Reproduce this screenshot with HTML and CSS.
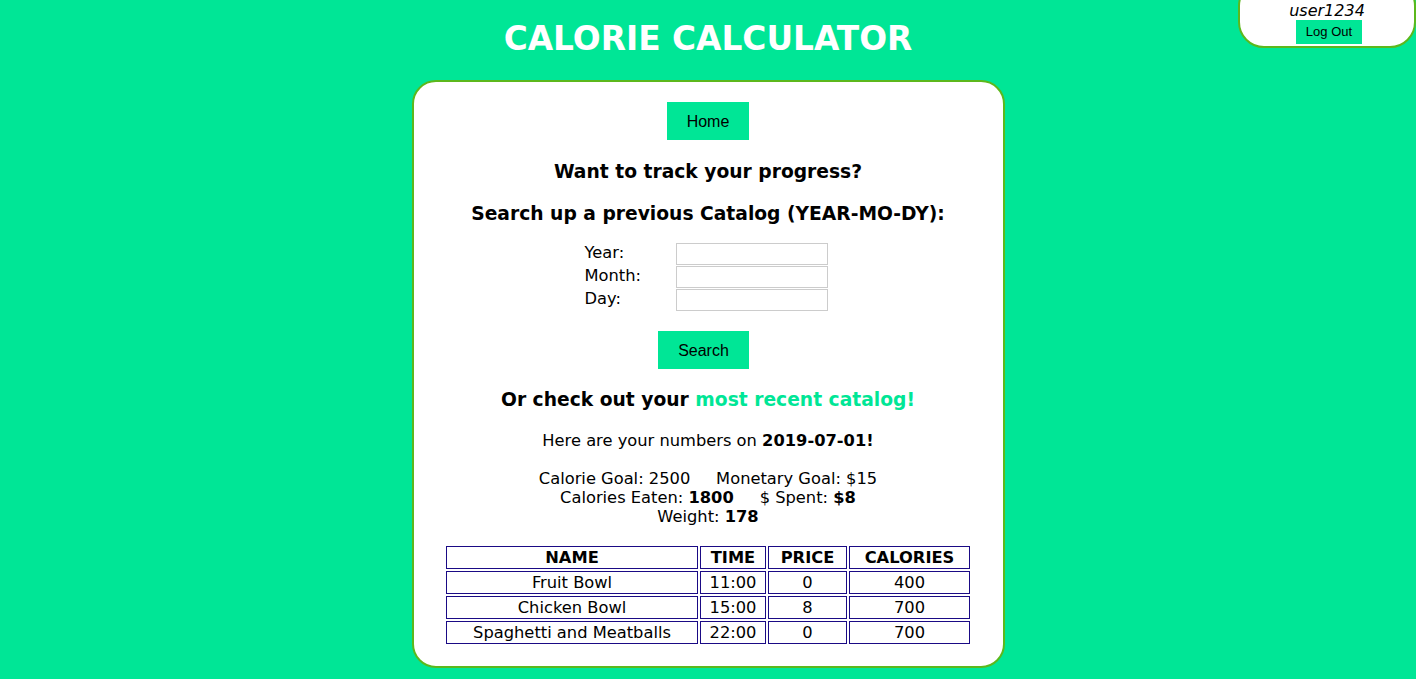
FILE: index.html
```html
<!DOCTYPE html>
<html lang="en">
<head>
<meta charset="utf-8">
<title>Calorie Calculator</title>
<link rel="stylesheet" href="styles.css">
</head>
<body>
<div class="userbox">
  <div class="username">user1234</div>
  <button class="btn btn-small">Log Out</button>
</div>
<h1 class="title">CALORIE CALCULATOR</h1>
<main class="card">
  <button class="btn">Home</button>
  <h3 class="heading heading-first">Want to track your progress?</h3>
  <h3 class="heading">Search up a previous Catalog (YEAR-MO-DY):</h3>
  <form class="search-form">
    <label class="field-label">Year:</label><input class="field-input" type="text">
    <label class="field-label">Month:</label><input class="field-input" type="text">
    <label class="field-label">Day:</label><input class="field-input" type="text">
  </form>
  <button class="btn btn-search">Search</button>
  <h3 class="heading">Or check out your <a class="recent-link" href="#">most recent catalog!</a></h3>
  <p class="numbers">Here are your numbers on <b>2019-07-01!</b></p>
  <div class="stats">
    <div>Calorie Goal: 2500&nbsp;&nbsp;&nbsp;&nbsp;&nbsp;Monetary Goal: $15</div>
    <div>Calories Eaten: <b>1800</b>&nbsp;&nbsp;&nbsp;&nbsp;&nbsp;$ Spent: <b>$8</b></div>
    <div>Weight: <b>178</b></div>
  </div>
  <table class="meals">
    <thead>
      <tr><th class="col-name">NAME</th><th class="col-time">TIME</th><th class="col-price">PRICE</th><th class="col-cal">CALORIES</th></tr>
    </thead>
    <tbody>
      <tr><td>Fruit Bowl</td><td>11:00</td><td>0</td><td>400</td></tr>
      <tr><td>Chicken Bowl</td><td>15:00</td><td>8</td><td>700</td></tr>
      <tr><td>Spaghetti and Meatballs</td><td>22:00</td><td>0</td><td>700</td></tr>
    </tbody>
  </table>
</main>
</body>
</html>
```

FILE: styles.css
```css
html, body {
  margin: 0;
  padding: 0;
}
body {
  background: #00e696;
  font-family: "DejaVu Sans", Verdana, sans-serif;
  font-size: 16.3px;
  color: #000;
  position: relative;
  min-height: 679px;
  overflow: hidden;
}
.title {
  margin: 20px 0 22px;
  text-align: center;
  color: #fff;
  font-size: 32.8px;
  line-height: 38px;
  font-weight: bold;
}
.userbox {
  position: absolute;
  top: -20px;
  right: 0;
  width: 174px;
  padding: 18px 0 2px;
  background: #fff;
  border: 2px solid #5cb81c;
  border-radius: 26px;
  text-align: center;
}
.username {
  font-style: italic;
  font-size: 16px;
  line-height: 19px;
  margin: 1px 0 0;
}
.btn {
  background: #00e696;
  border: none;
  color: #000;
  font-family: "Liberation Sans", Arial, sans-serif;
  font-size: 16px;
  line-height: 18px;
  padding: 11px 20px 9px;
  margin: 0;
  cursor: pointer;
}
.btn-small {
  font-size: 13px;
  line-height: 16px;
  padding: 4px 10px 4px;
  margin-left: 4px;
}
.card {
  width: 589px;
  margin: 0 auto;
  background: #fff;
  border: 2px solid #5cb81c;
  border-radius: 24px;
  padding: 20px 0 20px;
  display: flex;
  flex-direction: column;
  align-items: center;
  text-align: center;
}
.heading {
  font-size: 18.7px;
  line-height: 22px;
  font-weight: bold;
  margin: 20px 0 0;
}
.heading-first {
  margin-top: 21px;
}
.recent-link {
  color: #00e696;
  text-decoration: none;
}
.search-form {
  margin: 18px 0 0 -4px;
  display: grid;
  grid-template-columns: 91px 152px;
  row-gap: 1px;
  text-align: left;
}
.field-label {
  line-height: 19px;
  height: 22px;
}
.field-input {
  box-sizing: border-box;
  width: 152px;
  height: 22px;
  margin: 0;
  border: 1px solid #cccccc;
  background: #fff;
  padding: 0 3px;
}
.btn-search {
  margin-top: 20px;
  margin-right: 9px;
}
.numbers {
  margin: 20px 0 0;
  line-height: 19px;
}
.stats {
  margin-top: 19px;
  line-height: 19px;
}
.meals {
  margin-top: 18px;
  border-spacing: 2px;
  border-collapse: separate;
  font-size: 16.3px;
}
.meals th, .meals td {
  border: 1px solid #1a0a85;
  padding: 1px;
  line-height: 19px;
  text-align: center;
}
.meals th {
  font-weight: bold;
}
.col-name { width: 248px; }
.col-time { width: 62px; }
.col-price { width: 75px; }
.col-cal { width: 117px; }
```
